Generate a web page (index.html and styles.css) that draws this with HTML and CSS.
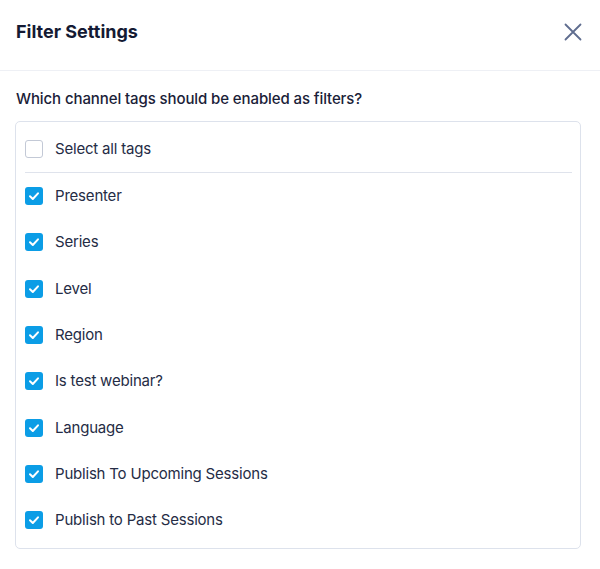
FILE: index.html
```html
<!DOCTYPE html>
<html>
<head>
<meta charset="utf-8">
<link rel="stylesheet" href="styles.css">
</head>
<body>
<div class="modal">
  <div class="header">
    <h1 class="title">Filter Settings</h1>
    <button class="close" aria-label="Close">
      <svg width="18" height="18" viewBox="0 0 18 18"><path d="M1.5 1.5 L16.5 16.5 M16.5 1.5 L1.5 16.5" stroke="#5f6d8f" stroke-width="1.8" stroke-linecap="round" fill="none"/></svg>
    </button>
  </div>
  <div class="body">
    <p class="question">Which channel tags should be enabled as filters?</p>
    <div class="box">
      <label class="row all"><span class="cb"></span><span class="label">Select all tags</span></label>
      <div class="sep"></div>
      <label class="row"><span class="cb on"><svg viewBox="0 0 18 18" width="18" height="18"><path d="M5 9.3 L7.8 12 L13 6.3" stroke="#fff" stroke-width="2" fill="none" stroke-linecap="round" stroke-linejoin="round"/></svg></span><span class="label">Presenter</span></label>
      <label class="row"><span class="cb on"><svg viewBox="0 0 18 18" width="18" height="18"><path d="M5 9.3 L7.8 12 L13 6.3" stroke="#fff" stroke-width="2" fill="none" stroke-linecap="round" stroke-linejoin="round"/></svg></span><span class="label">Series</span></label>
      <label class="row"><span class="cb on"><svg viewBox="0 0 18 18" width="18" height="18"><path d="M5 9.3 L7.8 12 L13 6.3" stroke="#fff" stroke-width="2" fill="none" stroke-linecap="round" stroke-linejoin="round"/></svg></span><span class="label">Level</span></label>
      <label class="row"><span class="cb on"><svg viewBox="0 0 18 18" width="18" height="18"><path d="M5 9.3 L7.8 12 L13 6.3" stroke="#fff" stroke-width="2" fill="none" stroke-linecap="round" stroke-linejoin="round"/></svg></span><span class="label">Region</span></label>
      <label class="row"><span class="cb on"><svg viewBox="0 0 18 18" width="18" height="18"><path d="M5 9.3 L7.8 12 L13 6.3" stroke="#fff" stroke-width="2" fill="none" stroke-linecap="round" stroke-linejoin="round"/></svg></span><span class="label">Is test webinar?</span></label>
      <label class="row"><span class="cb on"><svg viewBox="0 0 18 18" width="18" height="18"><path d="M5 9.3 L7.8 12 L13 6.3" stroke="#fff" stroke-width="2" fill="none" stroke-linecap="round" stroke-linejoin="round"/></svg></span><span class="label">Language</span></label>
      <label class="row"><span class="cb on"><svg viewBox="0 0 18 18" width="18" height="18"><path d="M5 9.3 L7.8 12 L13 6.3" stroke="#fff" stroke-width="2" fill="none" stroke-linecap="round" stroke-linejoin="round"/></svg></span><span class="label">Publish To Upcoming Sessions</span></label>
      <label class="row"><span class="cb on"><svg viewBox="0 0 18 18" width="18" height="18"><path d="M5 9.3 L7.8 12 L13 6.3" stroke="#fff" stroke-width="2" fill="none" stroke-linecap="round" stroke-linejoin="round"/></svg></span><span class="label">Publish to Past Sessions</span></label>
    </div>
  </div>
</div>
</body>
</html>
```
FILE: styles.css
```css
* { box-sizing: border-box; }
html, body { margin: 0; padding: 0; background: #fff; }
body { font-family: Inter, "Noto Sans", "Liberation Sans", sans-serif; color: #1c2440; }
.modal { width: 600px; height: 569px; background: #fff; }
.header {
  height: 71px;
  display: flex;
  align-items: center;
  justify-content: space-between;
  padding: 0 18px 0 16px;
  border-bottom: 1px solid #eef0f5;
}
.title { margin: 0; font-size: 18px; font-weight: 700; color: #141a33; letter-spacing: 0; padding-bottom: 7px; }
.close { border: 0; background: none; padding: 0; width: 18px; height: 18px; display: flex; margin-bottom: 7px; cursor: pointer; }
.body { padding: 18px 19px 0 15px; }
.question { margin: 0 0 12px 1px; font-size: 15px; font-weight: 500; color: #1a2138; line-height: 20px; letter-spacing: -0.1px; }
.box {
  border: 1px solid #dde2ec;
  border-radius: 5px;
  padding: 4px 8px 5px 9px;
}
.row { display: flex; align-items: center; gap: 12px; height: 46.3px; font-size: 15px; color: #252c45; letter-spacing: -0.2px; }
.row.all { height: 46px; }
.sep { height: 1px; background: #dfe3ec; }
.cb {
  width: 18px; height: 18px; flex: none;
  border: 1.5px solid #c3c9d6; border-radius: 3px; background: #fff;
  display: flex;
}
.cb.on { border: none; background: #0b9de6; }
.label { line-height: 20px; }
```
